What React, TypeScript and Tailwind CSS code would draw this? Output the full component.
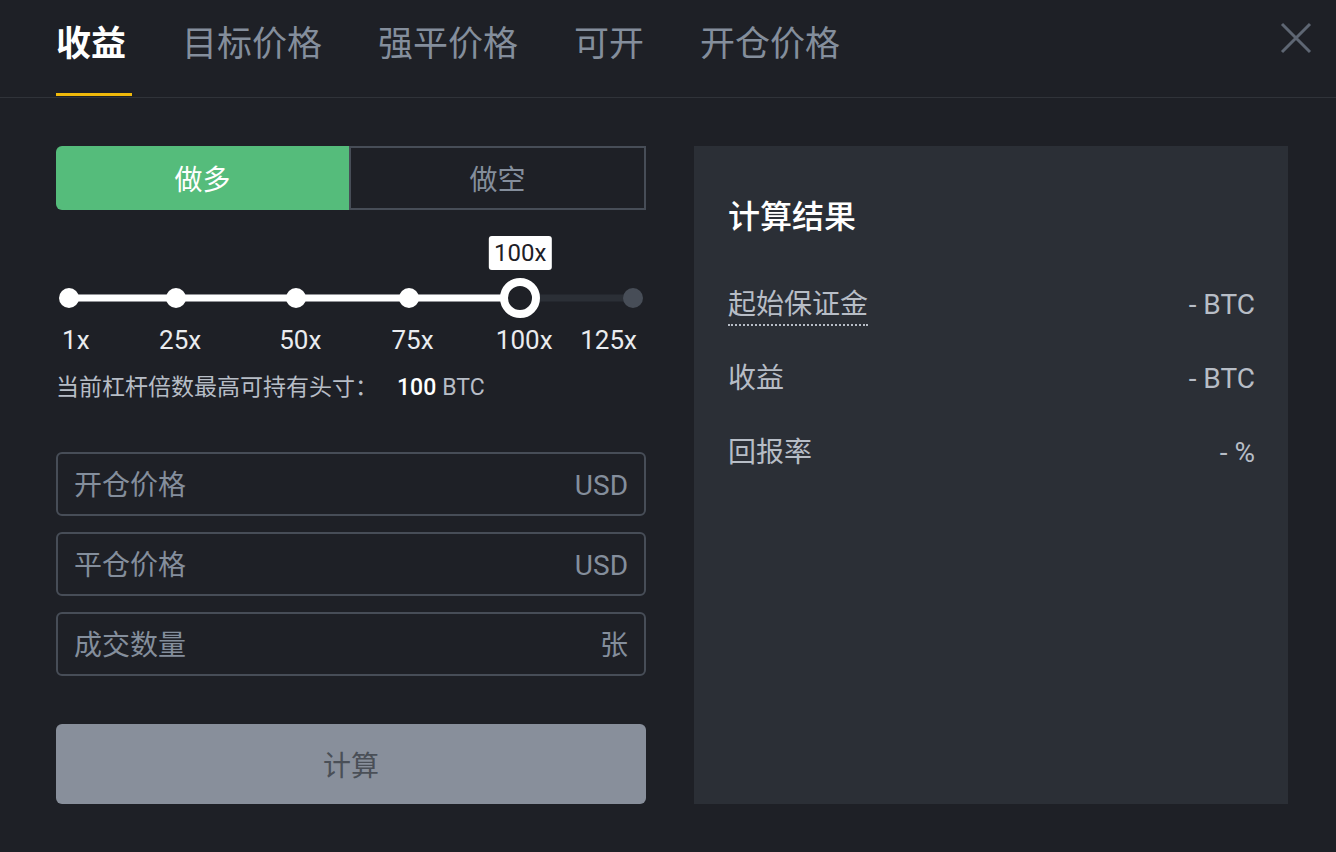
const tabs = ['收益', '目标价格', '强平价格', '可开', '开仓价格'];

// positions of the leverage marks along the track, in %
const marks = [
  { v: 1, at: 0 },
  { v: 25, at: 19 },
  { v: 50, at: 40.3 },
  { v: 75, at: 60.2 },
  { v: 100, at: 80 },
  { v: 125, at: 100 },
];
const current = 100;
const currentAt = 80;

const fields = [
  { label: '开仓价格', unit: 'USD' },
  { label: '平仓价格', unit: 'USD' },
  { label: '成交数量', unit: '张' },
];

const results = [
  { label: '起始保证金', value: '- BTC', dotted: true },
  { label: '收益', value: '- BTC', dotted: false },
  { label: '回报率', value: '- %', dotted: false },
];

export default function App() {
  return (
    <div className="w-[1336px] h-[852px] bg-[#1e2026] font-['Roboto','Noto_Sans_CJK_SC',sans-serif] text-white overflow-hidden">
      {/* Tabs header */}
      <div className="flex justify-between h-[98px] border-b border-[#303339]">
        <div className="flex gap-[56px] pl-[56px] h-full">
          {tabs.map((t, i) => (
            <div key={t} className="relative flex flex-col h-full pt-[27px]">
              <span
                className={`text-[35px] leading-[35px] whitespace-nowrap ${
                  i === 0 ? 'font-bold text-white' : 'text-[#848e9c]'
                }`}
              >
                {t}
              </span>
              {i === 0 && <div className="absolute left-0 bottom-[1px] h-[3px] w-[76px] bg-[#f0b90b]" />}
            </div>
          ))}
        </div>
        <button className="mt-[22px] mr-[24px] self-start">
          <svg width="32" height="32" viewBox="0 0 32 32" fill="none" stroke="#5e6673" strokeWidth="3">
            <path d="M2 2L30 30M30 2L2 30" />
          </svg>
        </button>
      </div>

      <div className="flex gap-[48px] pl-[56px] pr-[48px] pt-[48px]">
        {/* Left column */}
        <div className="w-[590px] flex flex-col">
          <div className="flex h-[64px]">
            <div className="flex-1 flex items-center justify-center pt-[6px] bg-[#55bc7b] rounded-l-[6px] text-[28px] text-white">
              做多
            </div>
            <div className="flex-1 flex items-center justify-center pt-[6px] border-2 border-[#474d57] text-[28px] text-[#848e9c]">
              做空
            </div>
          </div>

          {/* Leverage slider */}
          <div className="relative mx-[13px] mt-[68px] h-[40px]">
            <div className="absolute left-0 right-0 top-1/2 -translate-y-1/2 h-[7px] bg-[#2b2f36] rounded-full" />
            <div
              className="absolute left-0 top-1/2 -translate-y-1/2 h-[7px] bg-white rounded-full"
              style={{ width: `${currentAt}%` }}
            />
            {marks
              .filter((m) => m.v !== current)
              .map((m) => (
                <div
                  key={m.v}
                  className={`absolute top-1/2 -translate-x-1/2 -translate-y-1/2 w-[20px] h-[20px] rounded-full ${
                    m.v < current ? 'bg-white' : 'bg-[#474d57]'
                  }`}
                  style={{ left: `${m.at}%` }}
                />
              ))}
            <div
              className="absolute top-0 -translate-x-1/2 w-[40px] h-[40px] rounded-full border-[8px] border-white bg-[#1e2026]"
              style={{ left: `${currentAt}%` }}
            >
              <div className="absolute bottom-full left-1/2 -translate-x-1/2 mb-[16px] h-[34px] px-[5px] rounded-[3px] bg-white text-[#1e2026] text-[24px] leading-[34px]">
                {current}x
              </div>
            </div>
          </div>

          <div className="relative mx-[13px] mt-[9px] h-[26px] text-[26px] leading-[26px] text-[#eaecef]">
            {marks.map((m, i) => {
              if (i === 0)
                return (
                  <span key={m.v} className="absolute left-[-7px]">
                    {m.v}x
                  </span>
                );
              if (i === marks.length - 1)
                return (
                  <span key={m.v} className="absolute right-[-4px]">
                    {m.v}x
                  </span>
                );
              return (
                <span
                  key={m.v}
                  className="absolute -translate-x-1/2 ml-[4px]"
                  style={{ left: `${m.at}%` }}
                >
                  {m.v}x
                </span>
              );
            })}
          </div>

          <div className="mt-[24px] text-[23px] leading-[22px] text-[#b7bdc6] whitespace-nowrap">
            当前杠杆倍数最高可持有头寸：
            <span className="ml-[19px] font-medium text-white">100</span>
            <span className="ml-[6px] text-[#b7bdc6]">BTC</span>
          </div>

          {/* Inputs */}
          <div className="mt-[53px] flex flex-col gap-[16px]">
            {fields.map((f) => (
              <div
                key={f.label}
                className="flex items-center h-[64px] px-[16px] pt-[3px] border-2 border-[#474d57] rounded-[6px]"
              >
                <input
                  className="flex-1 min-w-0 bg-transparent outline-none text-[28px] text-white placeholder:text-[#848e9c]"
                  placeholder={f.label}
                />
                <span className="text-[28px] text-[#848e9c]">{f.unit}</span>
              </div>
            ))}
          </div>

          <button className="mt-[48px] h-[80px] pt-[5px] rounded-[6px] bg-[#888f9b] text-[28px] text-[#4a4f57]">
            计算
          </button>
        </div>

        {/* Result panel */}
        <div className="flex-1 h-[658px] bg-[#2b2f36] pt-[55px] pl-[34px] pr-[33px]">
          <h2 className="text-[32px] leading-[32px] font-medium text-white">计算结果</h2>
          <div className="mt-[35px] flex flex-col">
            {results.map((r) => (
              <div key={r.label} className="flex items-center justify-between h-[74px]">
                <span
                  className={`text-[28px] leading-[28px] text-[#b7bdc6] ${
                    r.dotted ? 'mt-[7px] pb-[5px] border-b-2 border-dotted border-[#b7bdc6]' : ''
                  }`}
                >
                  {r.label}
                </span>
                <span className="text-[28px] text-[#b7bdc6]">{r.value}</span>
              </div>
            ))}
          </div>
        </div>
      </div>
    </div>
  );
}
